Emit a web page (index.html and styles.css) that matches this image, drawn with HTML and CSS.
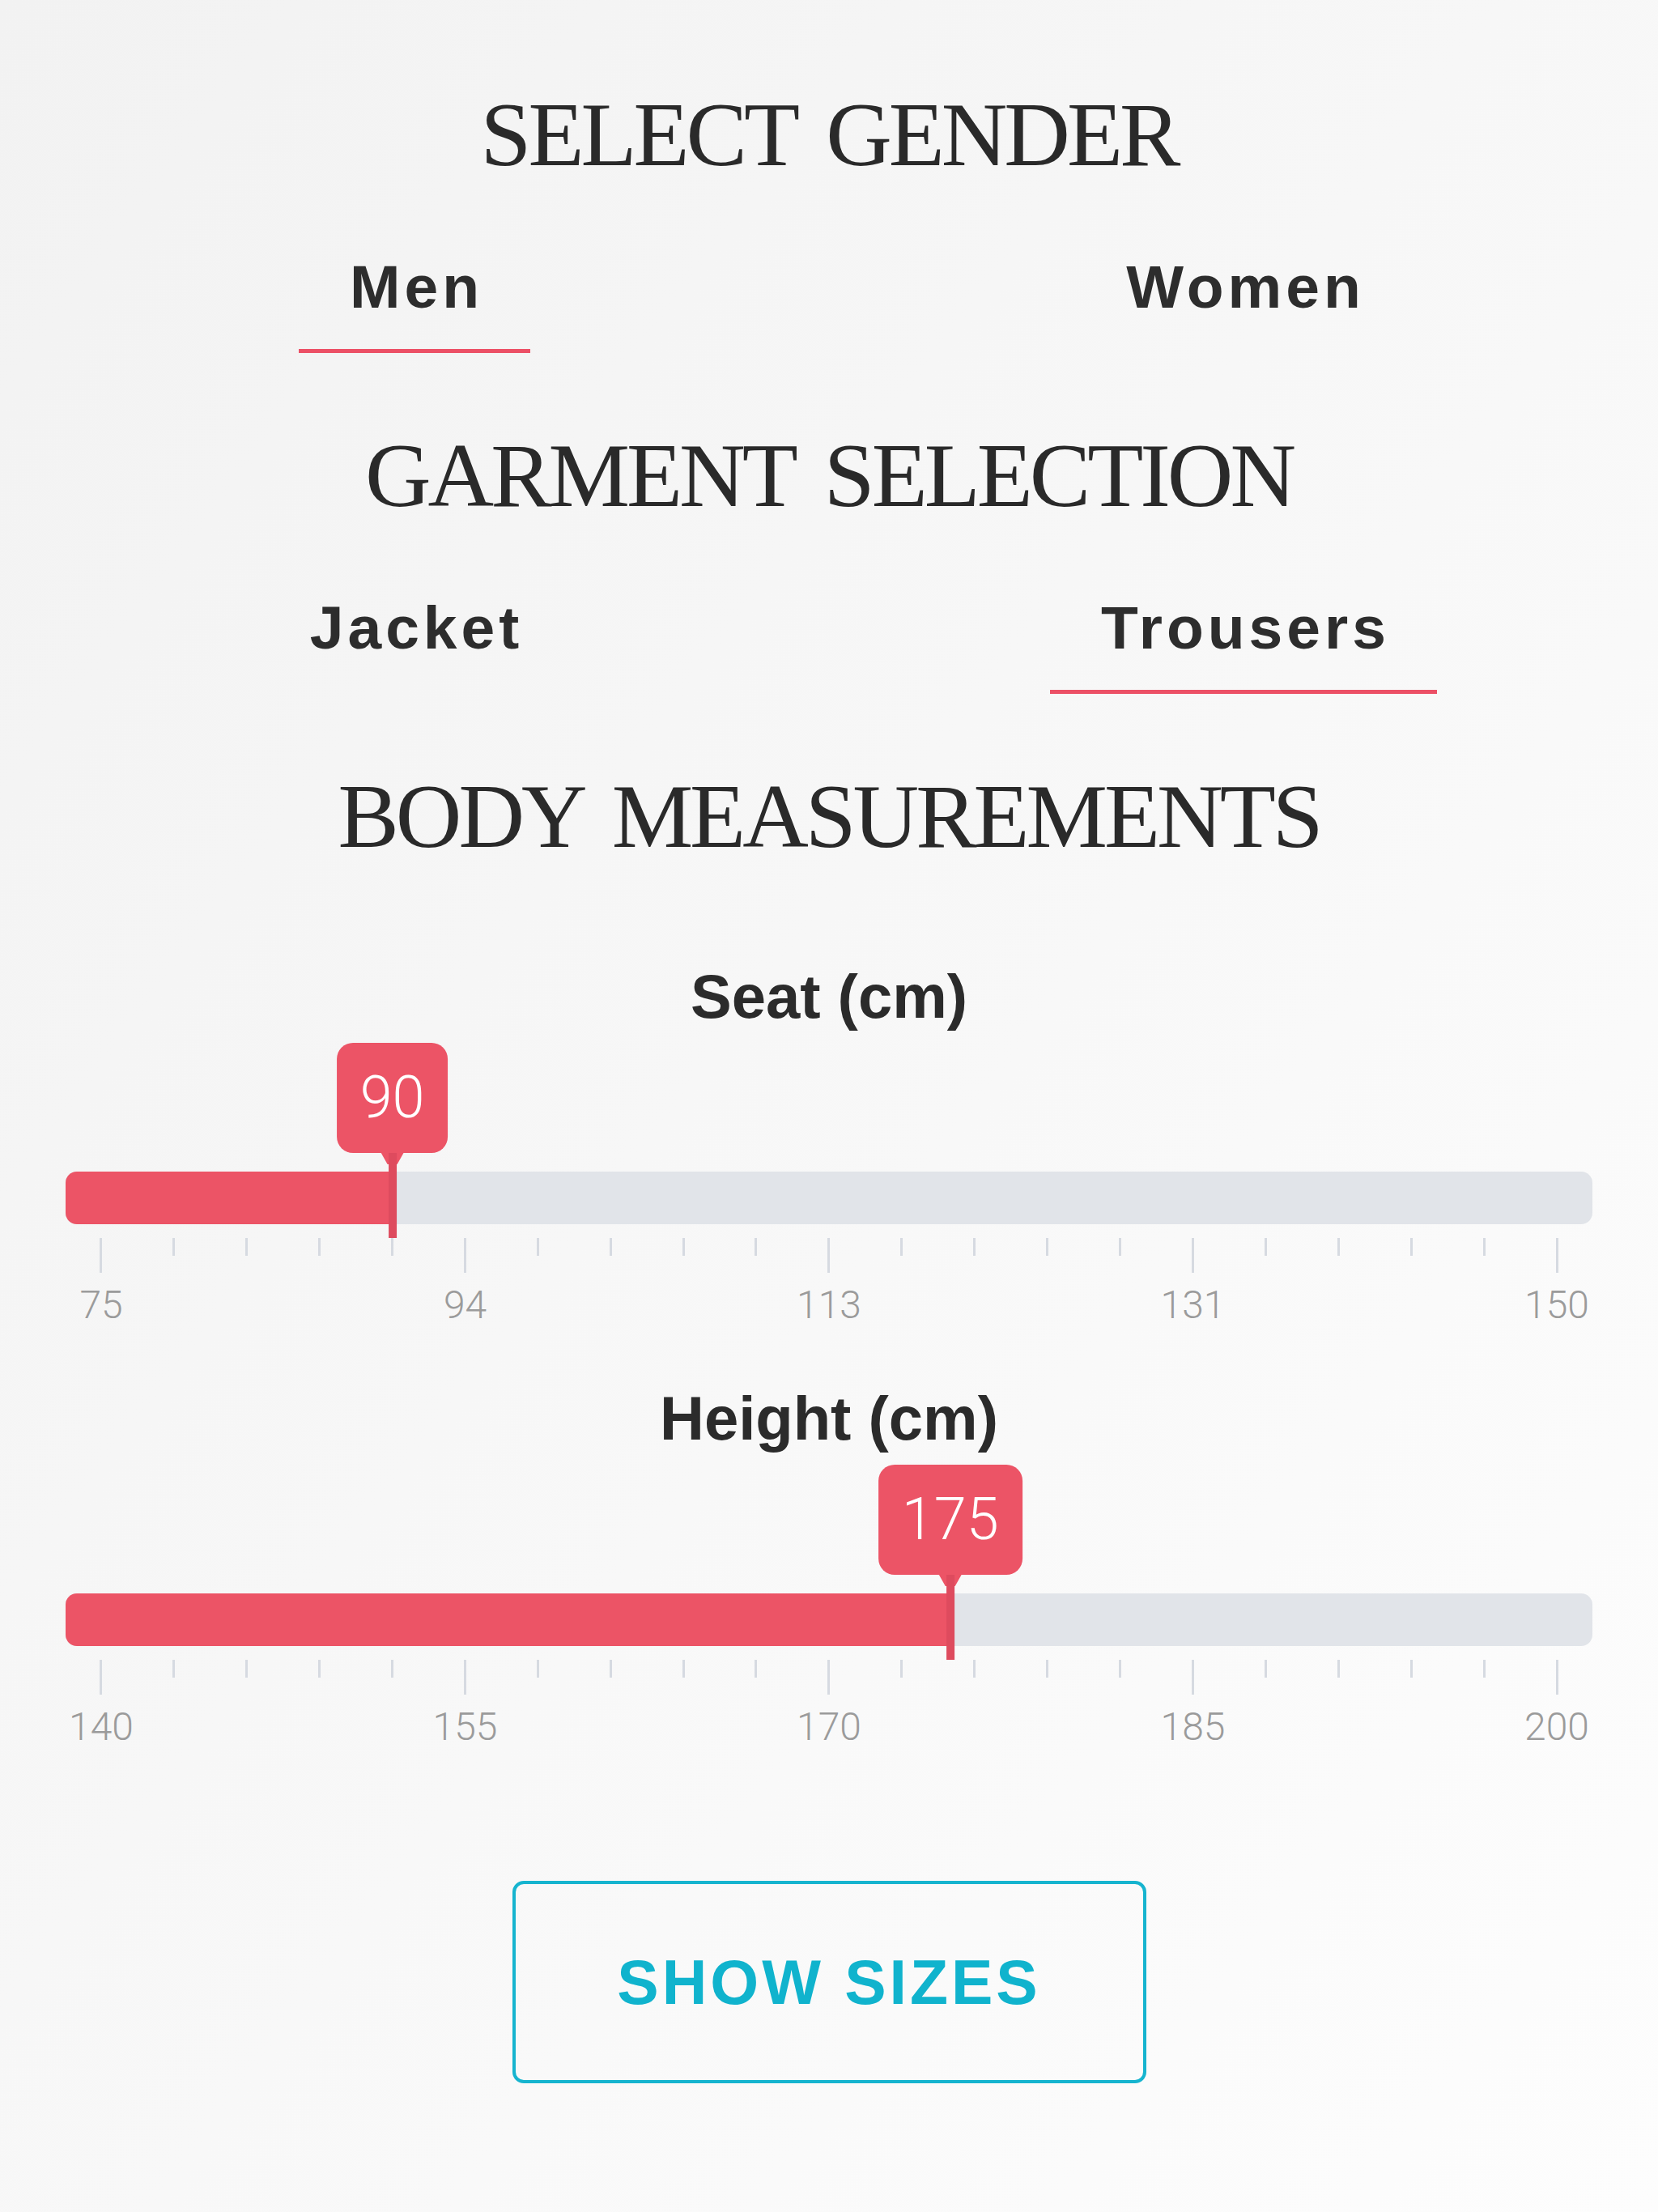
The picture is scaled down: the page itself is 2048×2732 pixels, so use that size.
FILE: index.html
```html
<!DOCTYPE html>
<html lang="en">
<head>
    <meta charset="UTF-8">
    <meta name="viewport" content="width=device-width, initial-scale=1.0">
    <title>Size Finder</title>
    <link rel="stylesheet" href="styles.css">
</head>
<body>
    <div class="finder">
        <h2 class="section-title">SELECT GENDER</h2>
        <div class="choices">
            <div class="choice"><span class="choice-label active">Men</span></div>
            <div class="choice"><span class="choice-label">Women</span></div>
        </div>

        <h2 class="section-title">GARMENT SELECTION</h2>
        <div class="choices">
            <div class="choice"><span class="choice-label">Jacket</span></div>
            <div class="choice"><span class="choice-label active">Trousers</span></div>
        </div>

        <h2 class="section-title">BODY MEASUREMENTS</h2>

        <!-- Seat slider -->
        <div class="measure">
            <div class="measure-label">Seat (cm)</div>
            <div class="range" style="--pos: 0.2">
                <div class="pin">90</div>
                <div class="track"><div class="fill"></div></div>
                <div class="ticks">
                    <span class="tick major"></span><span class="tick"></span><span class="tick"></span><span class="tick"></span><span class="tick"></span>
                    <span class="tick major"></span><span class="tick"></span><span class="tick"></span><span class="tick"></span><span class="tick"></span>
                    <span class="tick major"></span><span class="tick"></span><span class="tick"></span><span class="tick"></span><span class="tick"></span>
                    <span class="tick major"></span><span class="tick"></span><span class="tick"></span><span class="tick"></span><span class="tick"></span>
                    <span class="tick major"></span>
                </div>
                <div class="scale">
                    <span class="scale-num">75</span>
                    <span class="scale-num">94</span>
                    <span class="scale-num">113</span>
                    <span class="scale-num">131</span>
                    <span class="scale-num">150</span>
                </div>
            </div>
        </div>

        <!-- Height slider -->
        <div class="measure measure-height">
            <div class="measure-label">Height (cm)</div>
            <div class="range" style="--pos: 0.5833">
                <div class="pin">175</div>
                <div class="track"><div class="fill"></div></div>
                <div class="ticks">
                    <span class="tick major"></span><span class="tick"></span><span class="tick"></span><span class="tick"></span><span class="tick"></span>
                    <span class="tick major"></span><span class="tick"></span><span class="tick"></span><span class="tick"></span><span class="tick"></span>
                    <span class="tick major"></span><span class="tick"></span><span class="tick"></span><span class="tick"></span><span class="tick"></span>
                    <span class="tick major"></span><span class="tick"></span><span class="tick"></span><span class="tick"></span><span class="tick"></span>
                    <span class="tick major"></span>
                </div>
                <div class="scale">
                    <span class="scale-num">140</span>
                    <span class="scale-num">155</span>
                    <span class="scale-num">170</span>
                    <span class="scale-num">185</span>
                    <span class="scale-num">200</span>
                </div>
            </div>
        </div>

        <div class="actions">
            <button class="show-btn">SHOW SIZES</button>
        </div>
    </div>
</body>
</html>
```

FILE: styles.css
```css
body {
    margin: 0;
    min-height: 2732px;
    font-family: 'Liberation Sans', Arial, sans-serif;
    color: #2b2b2b;
    background: linear-gradient(to bottom right, #f2f2f2, #fdfdfd);
}

.finder {
    padding-top: 109px;
}

.section-title {
    margin: 0;
    font-family: 'Liberation Serif', 'Times New Roman', serif;
    font-weight: normal;
    font-size: 113px;
    line-height: 1;
    letter-spacing: -4px;
    word-spacing: 14px;
    text-align: center;
    color: #2a2a2a;
}

/* two columns of options under each title */
.choices {
    display: grid;
    grid-template-columns: 1fr 1fr;
    margin: 95px 0 94px;
}

.choice {
    display: flex;
    justify-content: center;
}

.choice-label {
    display: inline-block;
    padding: 0 58px 39px 63px;
    font-size: 75px;
    font-weight: bold;
    line-height: 1;
    letter-spacing: 5px;
    border-bottom: 5px solid transparent;
    color: #2d2d2d;
}

.choice-label.active {
    border-bottom-color: #ec5066;
}

/* sliders */
.measure {
    margin-top: 129px;
}

.measure-height {
    margin-top: 78px;
}

.measure-label {
    font-size: 76px;
    font-weight: bold;
    line-height: 1;
    text-align: center;
    color: #2b2b2b;
}

.range {
    position: relative;
    margin: 0 81px;
    padding-top: 178px;
}

.track {
    height: 65px;
    border-radius: 14px;
    background: #e1e4e9;
    overflow: hidden;
}

.fill {
    height: 100%;
    width: calc(44px + (100% - 88px) * var(--pos));
    background: #ec5466;
}

.pin {
    position: absolute;
    top: 19px;
    left: calc(44px + (100% - 88px) * var(--pos));
    transform: translateX(-50%);
    height: 136px;
    padding: 0 29px;
    border-radius: 20px;
    background: #ec5466;
    color: #fff;
    font-family: Roboto, 'Liberation Sans', sans-serif;
    font-weight: 300;
    font-size: 72px;
    line-height: 136px;
    z-index: 2;
}

/* little neck under the bubble */
.pin::before {
    content: "";
    position: absolute;
    left: 50%;
    top: 134px;
    width: 30px;
    height: 16px;
    transform: translateX(-50%);
    background: #ec5466;
    clip-path: polygon(0 0, 100% 0, 70% 100%, 30% 100%);
}

/* stem down through the track */
.pin::after {
    content: "";
    position: absolute;
    left: 50%;
    top: 136px;
    width: 10px;
    height: 105px;
    transform: translateX(-50%);
    background: #de4b5e;
}

.ticks {
    display: flex;
    justify-content: space-between;
    align-items: flex-start;
    padding: 17px 42px 0;
}

.tick {
    width: 3px;
    height: 22px;
    background: #d6dae1;
}

.tick.major {
    height: 43px;
}

.scale {
    display: flex;
    justify-content: space-between;
    padding: 16px 44px 0;
}

.scale-num {
    width: 0;
    display: flex;
    justify-content: center;
    white-space: nowrap;
    font-family: Roboto, 'Liberation Sans', sans-serif;
    font-weight: 300;
    font-size: 48px;
    line-height: 1;
    color: #9b9b9b;
}

.actions {
    display: flex;
    justify-content: center;
    margin-top: 166px;
}

.show-btn {
    width: 783px;
    height: 250px;
    border: 4px solid #16b4cf;
    border-radius: 14px;
    background: transparent;
    color: #10b3cd;
    font-family: 'Liberation Sans', Arial, sans-serif;
    font-size: 77px;
    font-weight: bold;
    letter-spacing: 4px;
    cursor: pointer;
}
```
